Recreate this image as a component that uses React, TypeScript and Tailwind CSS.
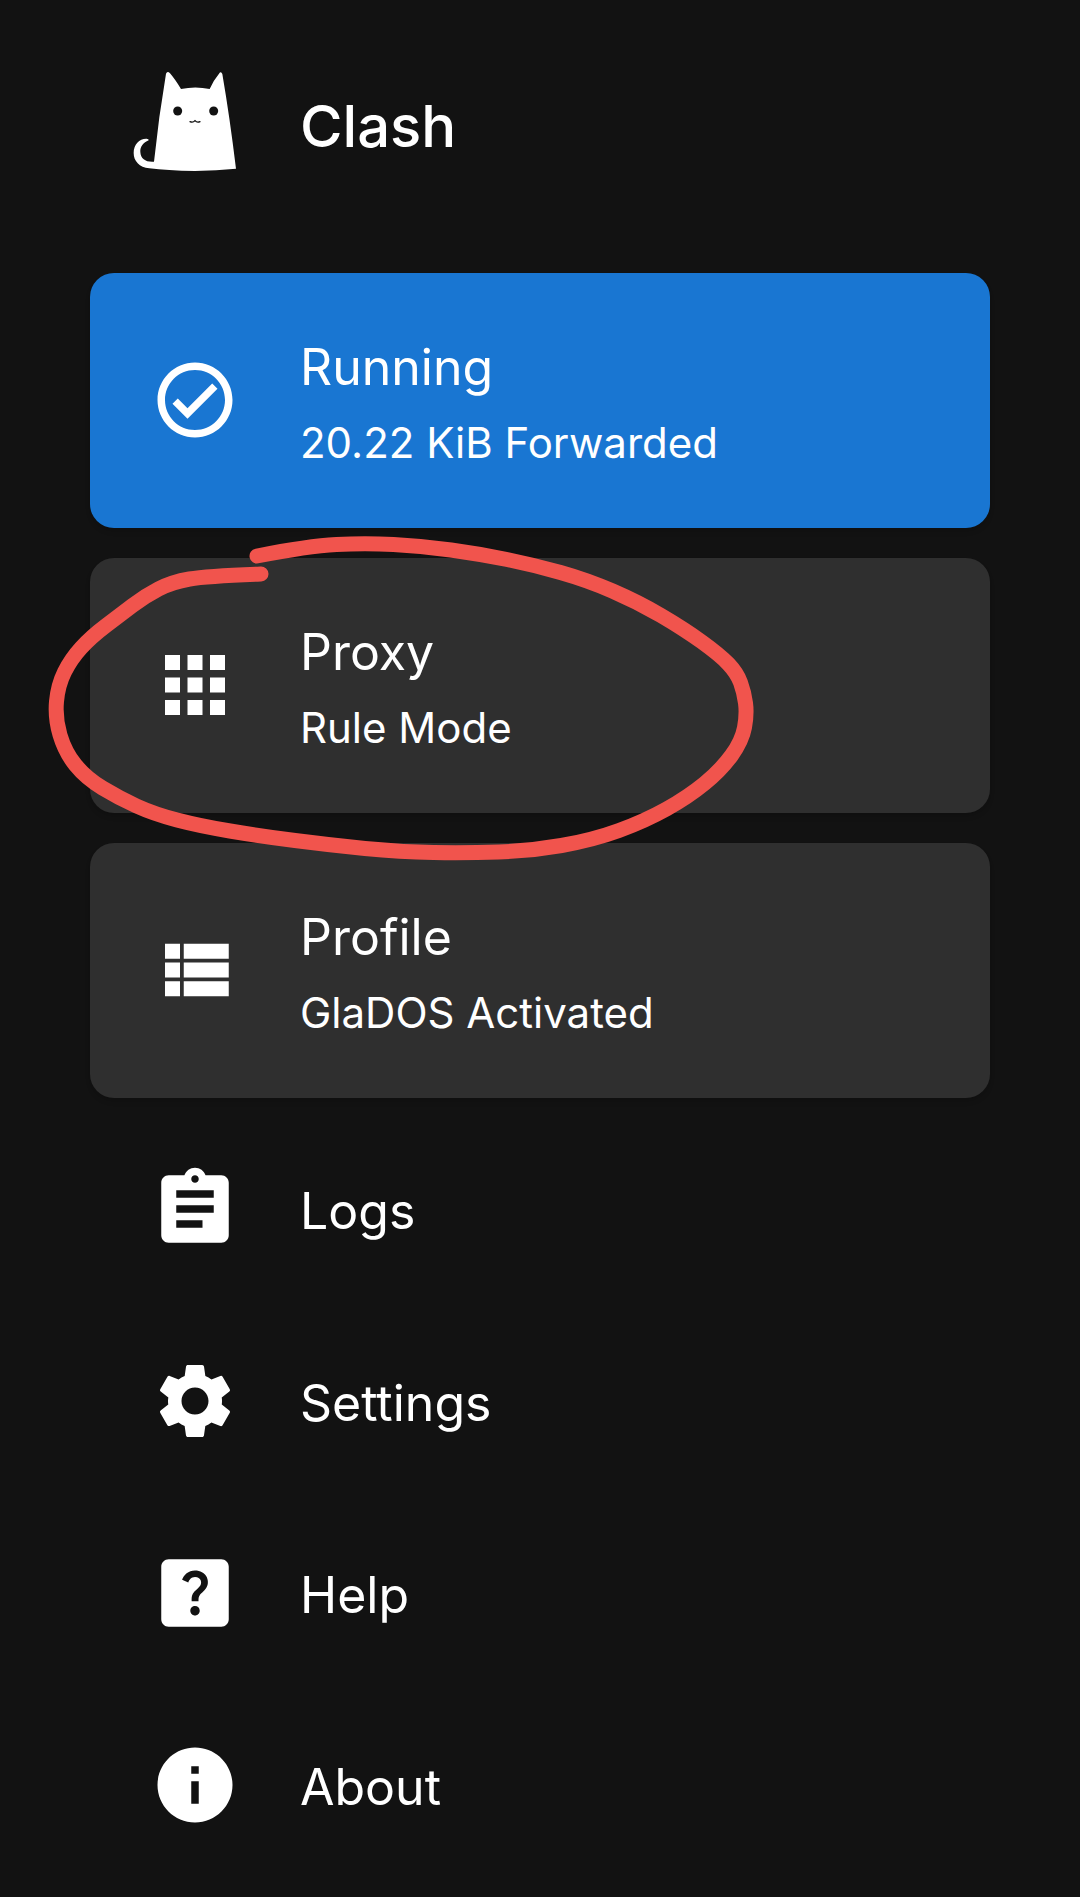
import type { ComponentType, ReactNode } from "react";
import { MdApps, MdAssignment, MdHelpCenter, MdInfo, MdSettings } from "react-icons/md";

type Icon = ComponentType<{ className?: string }>;
type Point = [number, number];

const STROKE: Point[] = [
  [257, 556], [308, 546], [365, 543], [422, 546], [480, 554], [534, 565],
  [587, 580], [638, 602], [684, 629], [720, 655], [737, 673], [744, 692],
  [747, 714], [742, 741], [721, 770], [688, 797], [645, 821], [593, 840],
  [530, 851], [467, 853], [400, 852], [330, 845], [260, 836], [200, 826],
  [154, 814], [119, 798], [86, 778], [65, 752], [55, 718], [58, 685],
  [71, 659], [91, 637], [120, 615], [145, 596], [172, 582], [207, 576],
  [261, 574],
];

// Quadratic curves that join the midpoints between neighbouring points
function smoothPath(points: Point[]): string {
  const last = points.length - 1;
  let d = `M${points[0][0]} ${points[0][1]}`;
  for (let i = 1; i < last; i++) {
    const [x, y] = points[i];
    const [nx, ny] = points[i + 1];
    const end = i === last - 1 ? [nx, ny] : [(x + nx) / 2, (y + ny) / 2];
    d += `Q${x} ${y} ${end[0]} ${end[1]}`;
  }
  return d;
}

function CheckCircleIcon({ className }: { className?: string }) {
  return (
    <svg viewBox="0 0 24 24" fill="currentColor" className={className} aria-hidden="true">
      <path d="M16.59 7.58L10 14.17l-2.59-2.58L6 13l4 4 8-8zM12 2C6.48 2 2 6.48 2 12s4.48 10 10 10 10-4.48 10-10S17.52 2 12 2zm0 18c-4.42 0-8-3.58-8-8s3.58-8 8-8 8 3.58 8 8-3.58 8-8 8z" />
    </svg>
  );
}

function ListIcon({ className }: { className?: string }) {
  return (
    <svg viewBox="0 0 24 24" fill="currentColor" className={className} aria-hidden="true">
      <path d="M4 14h4v-4H4v4zm0 5h4v-4H4v4zM4 9h4V5H4v4zm5 5h12v-4H9v4zm0 5h12v-4H9v4zM9 5v4h12V5H9z" />
    </svg>
  );
}

function CatLogo() {
  return (
    <svg viewBox="0 48 360 360" className="size-[120px] shrink-0" aria-hidden="true">
      <path
        fill="#fff"
        d="M138 71Q142 62 150 70Q164 86 183 117Q226 108 269 117Q281 90 297 71Q303 62 307 72Q329 200 348 356Q290 362 225 363Q140 362 88 355C58 352 41 333 41 309C41 283 59 265 80 266Q87 267 86 271C70 278 60 290 61 306C62 327 78 337 102 335Q116 200 138 71Z"
      />
      <circle cx="173" cy="183" r="13.5" fill="#121212" />
      <circle cx="281" cy="183" r="13.5" fill="#121212" />
      <path
        d="M210 215Q219 219 225 212Q231 219 240 215"
        fill="none"
        stroke="#121212"
        strokeWidth="4"
        strokeLinecap="round"
      />
    </svg>
  );
}

function Annotation() {
  return (
    <svg
      viewBox="40 528 720 340"
      className="pointer-events-none absolute -top-[30px] -left-[50px] h-[340px] w-[720px]"
      aria-hidden="true"
    >
      <path
        d={smoothPath(STROKE)}
        fill="none"
        stroke="#f1544d"
        strokeWidth="15"
        strokeLinecap="round"
        strokeLinejoin="round"
      />
    </svg>
  );
}

interface CardProps {
  icon: Icon;
  title: string;
  detail: string;
  color: string;
  children?: ReactNode;
}

function Card({ icon: CardIcon, title, detail, color, children }: CardProps) {
  return (
    <div className={`relative rounded-3xl shadow-md ${color}`}>
      <button
        type="button"
        className="flex min-h-[255px] w-full items-center gap-[60px] pb-px pl-[60px] text-left"
      >
        <CardIcon className="size-[90px] shrink-0" />
        <span className="flex flex-col pt-1.5">
          <span className="text-[50px] leading-[80px]">{title}</span>
          <span className="text-[42px] leading-[72px]">{detail}</span>
        </span>
      </button>
      {children}
    </div>
  );
}

const LINKS: { icon: Icon; label: string }[] = [
  { icon: MdAssignment, label: "Logs" },
  { icon: MdSettings, label: "Settings" },
  { icon: MdHelpCenter, label: "Help" },
  { icon: MdInfo, label: "About" },
];

export default function App() {
  return (
    <div className="min-h-screen bg-[#121212] px-[90px] font-['Inter',sans-serif] text-white">
      <header className="mb-[21px] flex h-[252px] items-center gap-[60px] pl-[30px]">
        <CatLogo />
        <h1 className="text-[58px] font-medium">Clash</h1>
      </header>
      <main className="flex flex-col gap-[30px]">
        <Card
          icon={CheckCircleIcon}
          title="Running"
          detail="20.22 KiB Forwarded"
          color="bg-[#1976d2]"
        />
        <Card icon={MdApps} title="Proxy" detail="Rule Mode" color="z-10 bg-[#2f2f2f]">
          <Annotation />
        </Card>
        <Card icon={ListIcon} title="Profile" detail="GlaDOS Activated" color="bg-[#2f2f2f]" />
      </main>
      <nav className="flex flex-col pt-[15px]">
        {LINKS.map(({ icon: LinkIcon, label }) => (
          <button
            key={label}
            type="button"
            className="flex h-[192px] items-center gap-[60px] pl-[60px] text-left text-[50px]"
          >
            <LinkIcon className="size-[90px] shrink-0" />
            <span className="pt-1">{label}</span>
          </button>
        ))}
      </nav>
    </div>
  );
}
